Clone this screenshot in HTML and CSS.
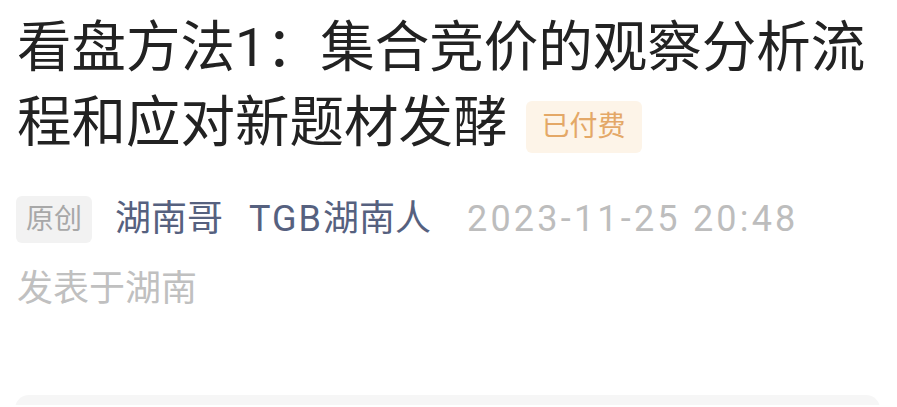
FILE: index.html
```html
<!DOCTYPE html>
<html lang="zh-CN">
<head>
<meta charset="utf-8">
<link rel="stylesheet" href="styles.css">
</head>
<body>
<div class="page">
  <h1 class="title">看盘方法1：集合竞价的观察分析流程和应对新题材发酵<span class="paid">已付费</span></h1>
  <div class="meta">
    <span class="orig">原创</span>
    <span class="author">湖南哥</span>
    <span class="author"><span class="latin">TGB</span>湖南人</span>
    <span class="date">2023-11-25 20:48</span>
  </div>
  <div class="loc">发表于湖南</div>
  <div class="box"></div>
</div>
</body>
</html>
```
FILE: styles.css
```css
html, body {
  margin: 0;
  padding: 0;
  background: #ffffff;
}
.page {
  padding: 10px 17px 0 17px;
  font-family: Roboto, "Noto Sans CJK SC", "Noto Sans", sans-serif;
  overflow: hidden;
  height: 395px;
}
.title {
  margin: 0;
  font-size: 54.5px;
  line-height: 75px;
  font-weight: 400;
  color: #222222;
}
.paid {
  display: inline-block;
  vertical-align: middle;
  margin-left: 18px;
  height: 52px;
  line-height: 52px;
  padding: 0 16px;
  font-size: 28px;
  color: #e4a867;
  background: #fdf4e8;
  border-radius: 6px;
}
.meta {
  display: flex;
  align-items: center;
  margin-top: 35px;
  height: 48px;
}
.orig {
  height: 47px;
  line-height: 47px;
  padding: 0 10px;
  font-size: 28px;
  color: #a8a8a8;
  background: #f2f2f2;
  border-radius: 6px;
  margin-left: -1px;
  margin-right: 23px;
}
.author {
  font-size: 36px;
  color: #56617f;
  margin-right: 26px;
  line-height: 48px;
}
.latin {
  letter-spacing: 2px;
}
.date {
  font-size: 36px;
  color: #bdbdbd;
  margin-left: 10px;
  letter-spacing: 3.2px;
  line-height: 48px;
}
.loc {
  margin-top: 22px;
  font-size: 36px;
  line-height: 48px;
  color: #c0c0c0;
}
.box {
  margin-top: 82px;
  height: 60px;
  margin-left: -2px;
  background: #f6f6f6;
  border-radius: 14px;
}
```
